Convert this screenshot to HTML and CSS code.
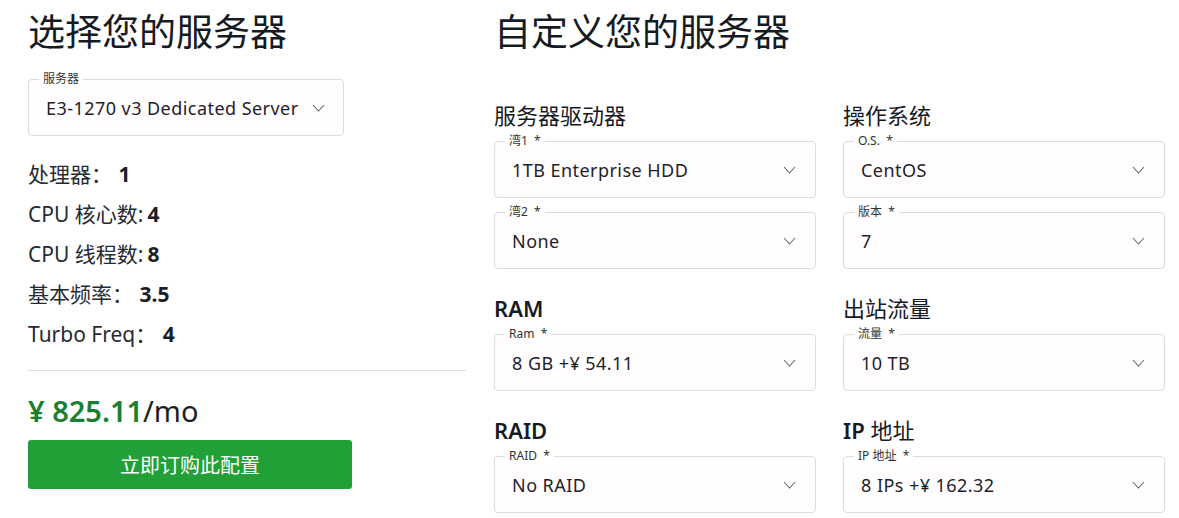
FILE: index.html
```html
<!DOCTYPE html>
<html lang="zh">
<head>
<meta charset="utf-8">
<link rel="stylesheet" href="styles.css">
</head>
<body>
<div class="page">
  <section class="left">
    <h1 class="title">选择您的服务器</h1>
    <div class="select wide">
      <span class="label">服务器</span>
      <span class="value">E3-1270 v3 Dedicated Server</span>
      <svg class="chev tight" width="13" height="8" viewBox="0 0 13 8"><path d="M1 1l5.5 6L12 1" fill="none" stroke="#666" stroke-width="1.1"/></svg>
    </div>
    <ul class="specs">
      <li>处理器： <b class="far">1</b></li>
      <li>CPU 核心数:<b>4</b></li>
      <li>CPU 线程数:<b>8</b></li>
      <li>基本频率： <b class="far">3.5</b></li>
      <li>Turbo Freq： <b class="far">4</b></li>
    </ul>
    <hr class="divider">
    <div class="price"><span class="amount">¥ 825.11</span>/mo</div>
    <button class="order">立即订购此配置</button>
  </section>
  <section class="right">
    <h1 class="title">自定义您的服务器</h1>
    <div class="grid">
      <div class="group">
        <h2 class="heading">服务器驱动器</h2>
        <div class="select">
          <span class="label">湾1 &nbsp;*</span>
          <span class="value">1TB Enterprise HDD</span>
          <svg class="chev" width="13" height="8" viewBox="0 0 13 8"><path d="M1 1l5.5 6L12 1" fill="none" stroke="#666" stroke-width="1.1"/></svg>
        </div>
        <div class="select">
          <span class="label">湾2 &nbsp;*</span>
          <span class="value">None</span>
          <svg class="chev" width="13" height="8" viewBox="0 0 13 8"><path d="M1 1l5.5 6L12 1" fill="none" stroke="#666" stroke-width="1.1"/></svg>
        </div>
      </div>
      <div class="group">
        <h2 class="heading">操作系统</h2>
        <div class="select">
          <span class="label">O.S. &nbsp;*</span>
          <span class="value">CentOS</span>
          <svg class="chev" width="13" height="8" viewBox="0 0 13 8"><path d="M1 1l5.5 6L12 1" fill="none" stroke="#666" stroke-width="1.1"/></svg>
        </div>
        <div class="select">
          <span class="label">版本 &nbsp;*</span>
          <span class="value">7</span>
          <svg class="chev" width="13" height="8" viewBox="0 0 13 8"><path d="M1 1l5.5 6L12 1" fill="none" stroke="#666" stroke-width="1.1"/></svg>
        </div>
      </div>
      <div class="group">
        <h2 class="heading"><span class="b">RAM</span></h2>
        <div class="select">
          <span class="label">Ram &nbsp;*</span>
          <span class="value">8 GB +¥ 54.11</span>
          <svg class="chev" width="13" height="8" viewBox="0 0 13 8"><path d="M1 1l5.5 6L12 1" fill="none" stroke="#666" stroke-width="1.1"/></svg>
        </div>
      </div>
      <div class="group">
        <h2 class="heading">出站流量</h2>
        <div class="select">
          <span class="label">流量 &nbsp;*</span>
          <span class="value">10 TB</span>
          <svg class="chev" width="13" height="8" viewBox="0 0 13 8"><path d="M1 1l5.5 6L12 1" fill="none" stroke="#666" stroke-width="1.1"/></svg>
        </div>
      </div>
      <div class="group">
        <h2 class="heading"><span class="b">RAID</span></h2>
        <div class="select">
          <span class="label">RAID &nbsp;*</span>
          <span class="value">No RAID</span>
          <svg class="chev" width="13" height="8" viewBox="0 0 13 8"><path d="M1 1l5.5 6L12 1" fill="none" stroke="#666" stroke-width="1.1"/></svg>
        </div>
      </div>
      <div class="group">
        <h2 class="heading"><span class="b">IP</span> 地址</h2>
        <div class="select">
          <span class="label">IP 地址 &nbsp;*</span>
          <span class="value">8 IPs +¥ 162.32</span>
          <svg class="chev" width="13" height="8" viewBox="0 0 13 8"><path d="M1 1l5.5 6L12 1" fill="none" stroke="#666" stroke-width="1.1"/></svg>
        </div>
      </div>
    </div>
  </section>
</div>
</body>
</html>
```

FILE: styles.css
```css
* { box-sizing: border-box; }
html, body { margin: 0; background: #fff; }
body {
  font-family: "Noto Sans", "Noto Sans CJK SC", sans-serif;
  color: #1b1e26;
}
.page {
  display: flex;
  gap: 28px;
  padding: 10px 0 0 28px;
}
.left { width: 438px; flex: none; }
.right { width: 671px; flex: none; }
.title {
  margin: 0;
  font-size: 37px;
  line-height: 44px;
  font-weight: 400;
  color: #161a23;
}
.select {
  position: relative;
  height: 57px;
  border: 1px solid #dcdcdc;
  border-radius: 4px;
  background: #fffdfd;
  display: flex;
  align-items: center;
  padding: 0 19px 0 17px;
}
.select.wide { width: 316px; margin-top: 25px; padding-right: 18px; }
.label {
  position: absolute;
  top: -9px;
  left: 10px;
  padding: 0 4px;
  background: #fff;
  font-size: 12px;
  line-height: 16px;
  color: #333;
}
.value {
  flex: 1;
  font-size: 18px;
  letter-spacing: 0.45px;
  color: #1f2229;
  white-space: nowrap;
  overflow: hidden;
}
.chev { flex: none; margin-left: auto; }
.chev.tight { margin-left: 1px; }
.specs {
  list-style: none;
  margin: 18px 0 0;
  padding: 0;
}
.specs li {
  font-size: 21px;
  line-height: 40px;
  color: #262a33;
}
.specs b { font-weight: 700; color: #1b1e26; margin-left: 4px; }
.specs b.far { margin-left: 1px; }
.divider {
  margin: 16px 0 0;
  border: 0;
  border-top: 1px solid #dcdcdc;
  height: 0;
}
.price {
  margin-top: 22px;
  font-size: 29px;
  line-height: 36px;
  color: #1b1e26;
}
.amount { color: #19802f; font-weight: 600; }
.order {
  display: block;
  margin-top: 11px;
  width: 324px;
  height: 49px;
  border: 0;
  border-radius: 3px;
  background: #21a038;
  color: #fff;
  font-family: "Noto Sans CJK SC", sans-serif;
  font-size: 20px;
}
.grid {
  display: grid;
  grid-template-columns: 322px 322px;
  column-gap: 27px;
  row-gap: 24px;
  margin-top: 46px;
}
.group { display: flex; flex-direction: column; }
.group .select + .select { margin-top: 14px; }
.heading {
  margin: 0 0 11px;
  font-size: 22px;
  line-height: 30px;
  font-weight: 400;
  color: #161a23;
}
.heading .b { font-weight: 600; }
```
